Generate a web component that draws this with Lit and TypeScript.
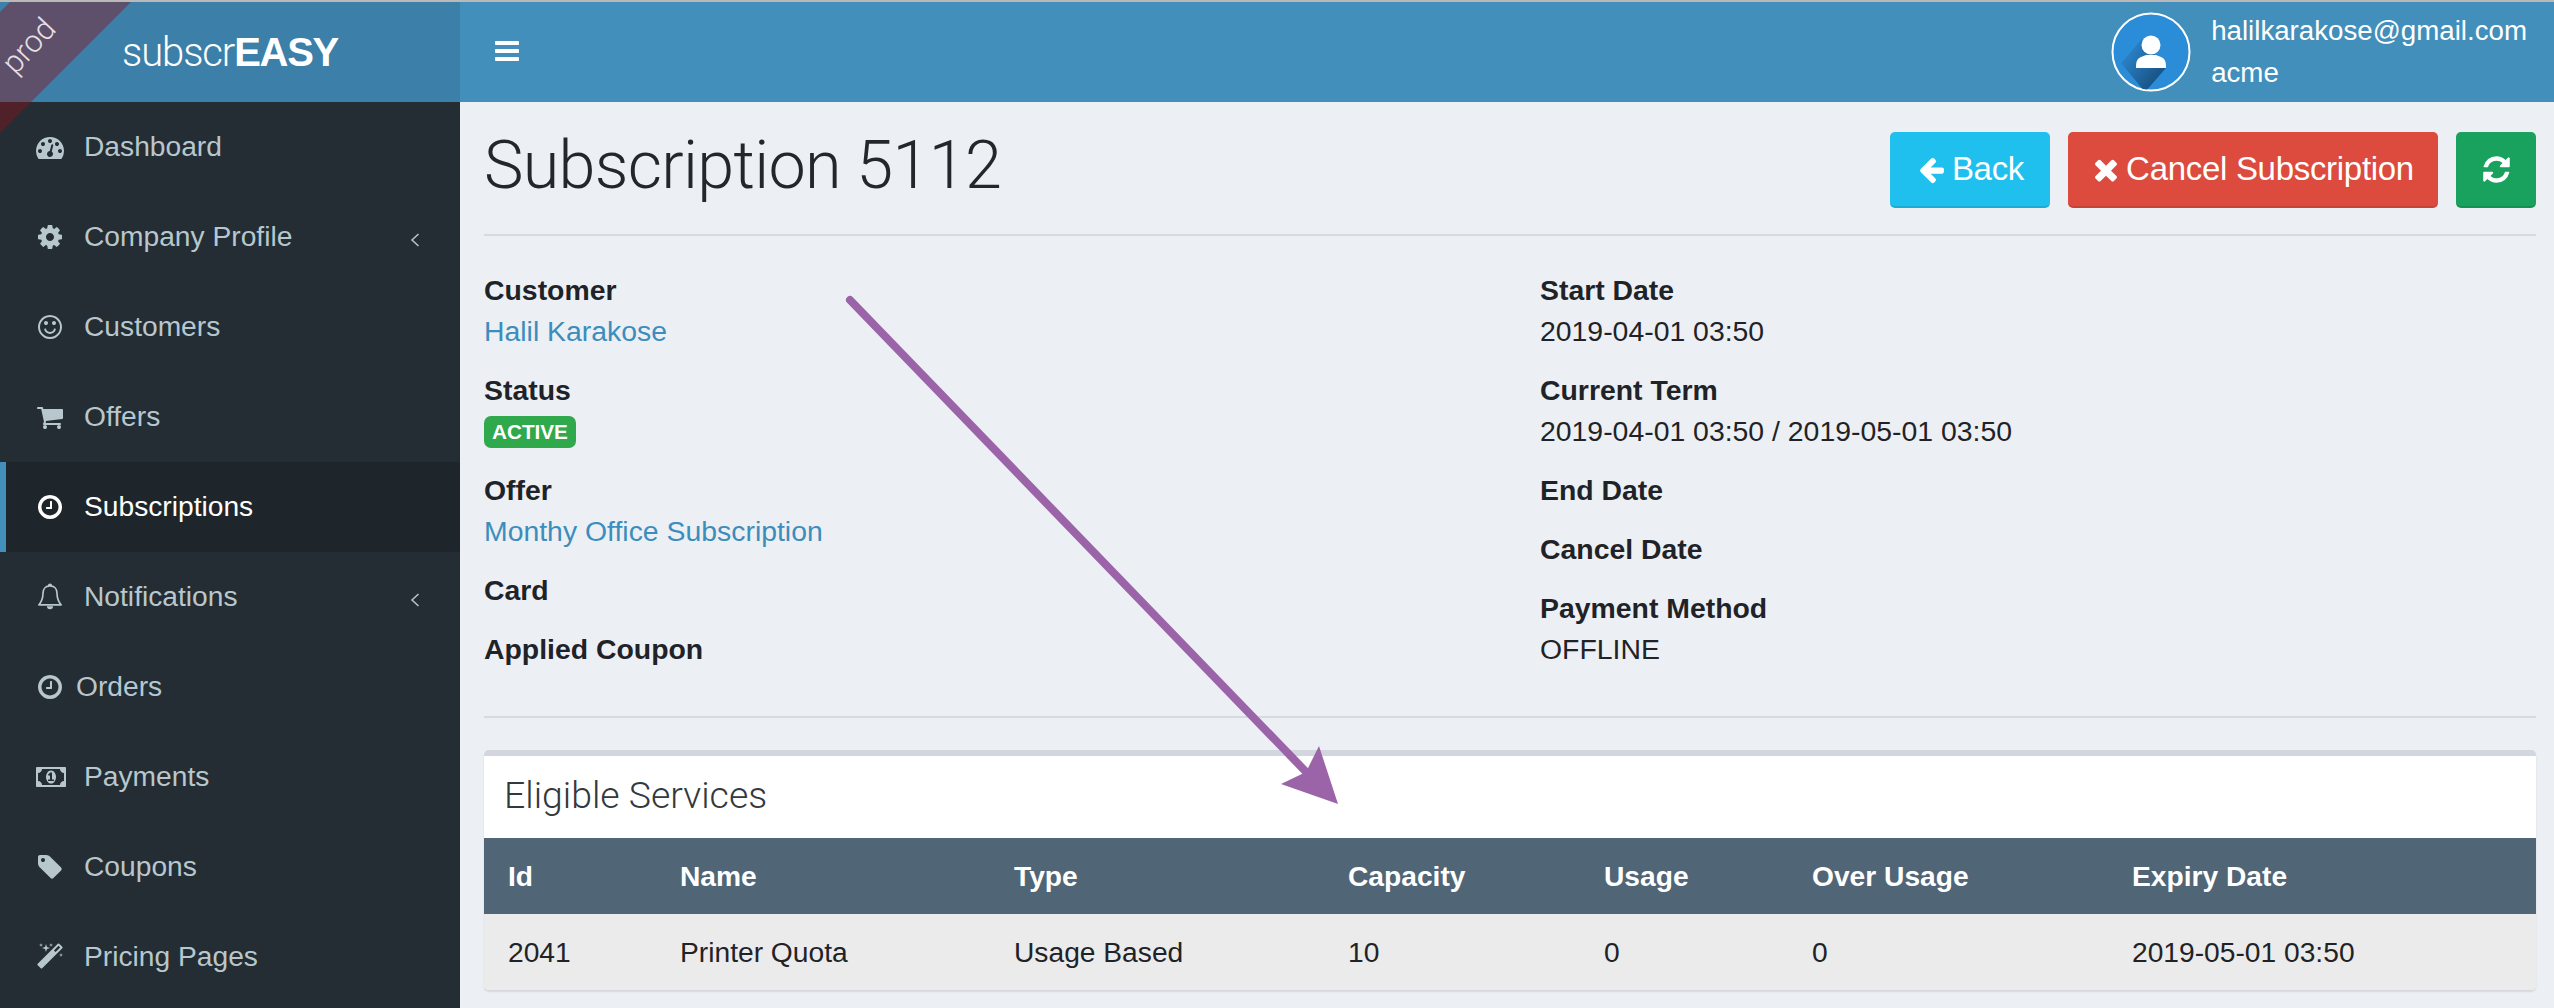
import { LitElement, html, css, svg } from "lit";
import { customElement } from "lit/decorators.js";

const P: Record<string, [string, string]> = {
  dashboard: ["0 0 1792 1792", "M384 1152q0-53-37.500-90.500t-90.500-37.500-90.500 37.500-37.500 90.500 37.500 90.500 90.500 37.500 90.500-37.500 37.500-90.500zm192-448q0-53-37.500-90.500t-90.500-37.500-90.500 37.500-37.500 90.500 37.500 90.500 90.500 37.500 90.500-37.500 37.500-90.500zm428 481l101-382q6-26-7.500-48.500t-38.500-29.500-48 6.500-30 39.500l-101 382q-60 5-107 43.500t-63 98.500q-20 77 20 146t117 89 146-20 89-117q16-60-6-117t-72-91zm660-33q0-53-37.500-90.500t-90.500-37.500-90.500 37.500-37.500 90.500 37.500 90.500 90.500 37.500 90.500-37.500 37.500-90.500zm-640-640q0-53-37.500-90.500t-90.500-37.500-90.500 37.500-37.500 90.500 37.500 90.500 90.500 37.500 90.500-37.500 37.500-90.500zm448 192q0-53-37.500-90.500t-90.500-37.500-90.500 37.500-37.500 90.500 37.500 90.500 90.500 37.500 90.500-37.500 37.500-90.500zm320 448q0 261-141 483-19 29-54 29h-1402q-35 0-54-29-141-221-141-483 0-182 71-348t191-286 286-191 348-71 348 71 286 191 191 286 71 348z"],
  cog: ["0 0 1536 1792", "M1024 896q0-106-75-181t-181-75-181 75-75 181 75 181 181 75 181-75 75-181zm512-109v222q0 12-8 23t-20 13l-185 28q-19 54-39 91 35 50 107 138 10 12 10 25t-9 23q-27 37-99 108t-94 71q-12 0-26-9l-138-108q-44 23-91 38-16 136-29 186-7 28-36 28h-222q-14 0-24.500-8.500t-11.500-21.500l-28-184q-49-16-90-37l-141 107q-10 9-25 9-14 0-25-11-126-114-165-168-7-10-7-23 0-12 8-23 15-21 51-66.500t54-70.500q-27-50-41-99l-183-27q-13-2-21-12.500t-8-23.500v-222q0-12 8-23t19-13l186-28q14-46 39-92-40-57-107-138-10-12-10-24 0-10 9-23 26-36 98.500-107.500t94.500-71.500q13 0 26 10l138 107q44-23 91-38 16-136 29-186 7-28 36-28h222q14 0 24.500 8.500t11.500 21.500l28 184q49 16 90 37l142-107q9-9 24-9 13 0 25 10 129 119 165 170 7 8 7 22 0 12-8 23-15 21-51 66.500t-54 70.500q26 50 41 98l183 28q13 2 21 12.500t8 23.500z"],
  smile: ["0 0 1536 1792", "M1134 1075q-37 121-138 195t-228 74-228-74-138-195q-8-25 4-48.500t38-31.500q25-8 48.500 4t31.500 38q25 80 92.500 129.500t151.500 49.500 151.500-49.500 92.500-129.500q8-26 32-38t49-4 37 31.500 4 48.500zm-494-435q0 53-37.500 90.500t-90.500 37.500-90.500-37.500-37.500-90.500 37.500-90.500 90.500-37.500 90.500 37.500 37.500 90.500zm512 0q0 53-37.500 90.500t-90.500 37.500-90.500-37.500-37.500-90.500 37.500-90.500 90.500-37.500 90.500 37.500 37.500 90.500zm256 256q0-130-51-248.500t-136.500-204-204-136.500-248.500-51-248.500 51-204 136.500-136.500 204-51 248.500 51 248.500 136.500 204 204 136.500 248.500 51 248.500-51 204-136.500 136.500-204 51-248.500zm128 0q0 209-103 385.500t-279.500 279.500-385.500 103-385.500-103-279.500-279.500-103-385.500 103-385.500 279.500-279.500 385.500-103 385.500 103 279.500 279.500 103 385.500z"],
  cart: ["0 0 1664 1792", "M640 1536q0 52-38 90t-90 38-90-38-38-90 38-90 90-38 90 38 38 90zm896 0q0 52-38 90t-90 38-90-38-38-90 38-90 90-38 90 38 38 90zm128-1088v512q0 24-16.500 42.500t-40.500 21.500l-1044 122q13 60 13 70 0 16-24 64h920q26 0 45 19t19 45-19 45-45 19h-1024q-26 0-45-19t-19-45q0-11 8-31.500t16-36 21.500-40 15.500-29.500l-177-823h-204q-26 0-45-19t-19-45 19-45 45-19h256q16 0 28.500 6.500t19.500 15.500 13 24.500 8 26 5.500 29.500 4.500 26h1201q26 0 45 19t19 45z"],
  clock: ["0 0 1536 1792", "M896 544v448q0 14-9 23t-23 9h-320q-14 0-23-9t-9-23v-64q0-14 9-23t23-9h224v-352q0-14 9-23t23-9h64q14 0 23 9t9 23zm416 352q0-148-73-273t-198-198-273-73-273 73-198 198-73 273 73 273 198 198 273 73 273-73 198-198 73-273zm224 0q0 209-103 385.500t-279.500 279.500-385.500 103-385.500-103-279.500-279.500-103-385.500 103-385.500 279.500-279.500 385.500-103 385.500 103 279.500 279.500 103 385.500z"],
  money: ["0 0 2048 1792", "M768 1152h384v-96h-128v-448h-114l-148 137 77 80q42-37 55-57h2v288h-128v96zm512-256q0 70-21 142t-59.500 134-101.500 101-138 39-138-39-101.500-101-59.500-134-21-142 21-142 59.500-134 101.500-101 138-39 138 39 101.500 101 59.500 134 21 142zm512 256v-512q-106 0-181-75t-75-181h-1152q0 106-75 181t-181 75v512q106 0 181 75t75 181h1152q0-106 75-181t181-75zm128-832v1152q0 26-19 45t-45 19h-1792q-26 0-45-19t-19-45v-1152q0-26 19-45t45-19h1792q26 0 45 19t19 45z"],
  tag: ["0 0 1536 1792", "M448 448q0-53-37.500-90.500t-90.500-37.500-90.500 37.500-37.500 90.500 37.500 90.500 90.500 37.500 90.500-37.500 37.500-90.500zm1067 576q0 53-37 90l-491 492q-39 37-91 37-53 0-90-37l-715-716q-38-37-64.500-101t-26.500-117v-416q0-52 38-90t90-38h416q53 0 117 26.500t102 64.500l715 714q37 39 37 91z"],
  magic: ["0 0 1792 1792", "M1254 581l293-293-107-107-293 293zm447-293q0 27-18 45l-1286 1286q-18 18-45 18t-45-18l-198-198q-18-18-18-45t18-45l1286-1286q18-18 45-18t45 18l198 198q18 18 18 45zm-1351-190l98 30-98 30-30 98-30-98-98-30 98-30 30-98zm350 162l196 60-196 60-60 196-60-196-196-60 196-60 60-196zm930 478l98 30-98 30-30 98-30-98-98-30 98-30 30-98zm-640-640l98 30-98 30-30 98-30-98-98-30 98-30 30-98z"],
  arrow: ["0 0 1792 1792", "M1664 896v128q0 53-32.500 90.500t-84.500 37.500h-704l293 294q38 36 38 90t-38 90l-75 76q-38 38-90 38-53 0-91-38l-651-652q-37-37-37-90 0-52 37-91l651-650q38-38 91-38 52 0 90 38l75 74q38 38 38 91t-38 91l-293 293h704q52 0 84.500 37.500t32.500 90.500z"],
  times: ["0 0 1408 1792", "M1298 1322q0 40-28 68l-136 136q-28 28-68 28t-68-28l-294-294-294 294q-28 28-68 28t-68-28l-136-136q-28-28-28-68t28-68l294-294-294-294q-28-28-28-68t28-68l136-136q28-28 68-28t68 28l294 294 294-294q28-28 68-28t68 28l136 136q28 28 28 68t-28 68l-294 294 294 294q28 28 28 68z"],
  refresh: ["0 0 1792 1792", "M1639 1056q0 5-1 7-64 268-268 434.500t-478 166.500q-146 0-282.500-55t-243.500-157l-129 129q-19 19-45 19t-45-19-19-45v-448q0-26 19-45t45-19h448q26 0 45 19t19 45-19 45l-137 137q71 66 161 102t187 36q134 0 250-65t186-179q11-17 53-117 8-23 30-23h192q13 0 22.500 9.500t9.500 22.500zm25-800v448q0 26-19 45t-45 19h-448q-26 0-45-19t-19-45 19-45l138-138q-148-137-349-137-134 0-250 65t-186 179q-11 17-53 117-8 23-30 23h-199q-13 0-22.500-9.500t-9.500-22.500v-7q65-268 270-434.500t480-166.500q146 0 284 55.500t245 156.500l130-129q19-19 45-19t45 19 19 45z"],
  bars: ["0 0 1792 1792", "M1664 1344v128q0 26-19 45t-45 19h-1408q-26 0-45-19t-19-45v-128q0-26 19-45t45-19h1408q26 0 45 19t19 45zm0-512v128q0 26-19 45t-45 19h-1408q-26 0-45-19t-19-45v-128q0-26 19-45t45-19h1408q26 0 45 19t19 45zm0-512v128q0 26-19 45t-45 19h-1408q-26 0-45-19t-19-45v-128q0-26 19-45t45-19h1408q26 0 45 19t19 45z"],
};

const ic = (n: string, cls = "") => html`<svg class="ic i-${n} ${cls}" viewBox=${P[n][0]}><path d=${P[n][1]} fill="currentColor"></path></svg>`;

const bell = html`<svg class="ic" viewBox="0 0 28 32"><path d="M14 3.200c-5.200 0-8 3.800-8 8.300 0 7.500-2 10.500-4.700 13.500h25.400C24 22 22 19 22 11.500c0-4.500-2.800-8.300-8-8.300zM12.500 3c0-2 3-2 3 0" fill="none" stroke="currentColor" stroke-width="1.900" stroke-linejoin="round"></path><path d="M10.500 26.500a3.500 3.500 0 0 0 7 0z" fill="currentColor"></path></svg>`;

const chevron = html`<svg class="chev" viewBox="0 0 10 14"><path d="M8.500 1 2 7l6.500 6" fill="none" stroke="currentColor" stroke-width="1.500"></path></svg>`;

const NAV = [
  { label: "Dashboard", icon: "dashboard" },
  { label: "Company Profile", icon: "cog", more: true },
  { label: "Customers", icon: "smile" },
  { label: "Offers", icon: "cart" },
  { label: "Subscriptions", icon: "clock", active: true },
  { label: "Notifications", icon: "bell", more: true },
  { label: "Orders", icon: "clock", tight: true },
  { label: "Payments", icon: "money" },
  { label: "Coupons", icon: "tag" },
  { label: "Pricing Pages", icon: "magic" },
];

const HEAD = ["Id", "Name", "Type", "Capacity", "Usage", "Over Usage", "Expiry Date"];
const ROW = ["2041", "Printer Quota", "Usage Based", "10", "0", "0", "2019-05-01 03:50"];

@customElement("app-root")
export class AppRoot extends LitElement {
  static styles = css`
    :host {
      display: block;
      position: relative;
      width: 2554px;
      height: 1008px;
      overflow: hidden;
      background: #ecf0f5;
      font-family: "Liberation Sans", Arial, sans-serif;
      font-size: 28.400px;
      color: #1f2327;
    }
    .app { display: grid; grid-template-columns: 460px 1fr; grid-template-rows: 102px 1fr; height: 1008px; }
    .logo {
      background: #3c7fa8;
      border-top: 2px solid #b9b9b9;
      box-sizing: border-box;
      color: #fff;
      font-size: 40px;
      letter-spacing: -1.300px;
      padding: 0 0 0 122px;
      display: flex;
      align-items: center;
    }
    .logo .thin { font-family: Roboto, sans-serif; font-weight: 300; letter-spacing: -1.100px; }
    .logo b { font-weight: 700; }
    .topbar {
      background: #428fbb;
      border-top: 2px solid #b9b9b9;
      box-sizing: border-box;
      color: #fff;
      display: flex;
      align-items: center;
      justify-content: space-between;
      padding: 0 27px 0 33px;
    }
    .burger { width: 30px; height: 30px; display: block; }
    .user { display: flex; align-items: center; gap: 20px; }
    .avatar { width: 80px; height: 80px; display: block; }
    .who { line-height: 42px; font-size: 27.700px; padding-bottom: 1px; }
    .side { background: #232d33; color: #b8c7ce; overflow: hidden; font-size: 28.200px; }
    .item {
      height: 90px;
      box-sizing: border-box;
      display: flex;
      align-items: center;
      padding: 0 36px 1px;
      position: relative;
    }
    .item.active { background: #1e262c; color: #fff; box-shadow: inset 6px 0 0 #428fbb; }
    .iconbox { width: 48px; display: flex; align-items: center; flex: none; }
    .item.tight .iconbox { width: 40px; }
    .ic { width: 28px; height: 28px; display: block; flex: none; }
    .ic.i-money { width: 32px; }
    .iconbox .ic { overflow: visible; }
    .chev { width: 10px; height: 14px; margin-left: auto; margin-right: 4px; margin-top: 7px; display: block; }
    .main { padding: 0 18px 0 24px; }
    .title-row { display: flex; align-items: flex-start; justify-content: space-between; height: 134px; box-sizing: border-box; border-bottom: 2px solid #d6dae1; }
    h1 { margin: 27px 0 0; font-size: 66.500px; font-weight: 300; line-height: 72px; letter-spacing: -0.700px; color: #22272b; font-family: Roboto, sans-serif; }
    .btns { display: flex; gap: 18px; margin-top: 30px; }
    .btn {
      height: 76px;
      box-sizing: border-box;
      border-radius: 5px;
      color: #fff;
      display: flex;
      align-items: center;
      justify-content: center;
      gap: 6px;
      font-size: 33px;
      letter-spacing: -0.300px;
      border-bottom: 2px solid rgba(0,0,0,.1);
    }
    .btn .ic { width: 29px; height: 29px; }
    .btn .x { width: 26px; height: 33px; margin-right: 1px; }
    .btn .r { width: 31px; height: 31px; }
    .back { width: 160px; background: #1fc0ee; padding-left: 1px; }
    .cancel { width: 370px; background: #dc4b3e; padding-left: 1px; }
    .refresh { width: 80px; background: #18a25e; }
    .details { display: grid; grid-template-columns: 1056px 1fr; height: 482px; box-sizing: border-box; padding-top: 34px; border-bottom: 2px solid #d6dae1; }
    .f { margin-bottom: 18px; line-height: 41px; }
    .f .k { font-weight: 700; display: block; line-height: 41px; }
    .f .v { display: block; line-height: 41px; }
    a { color: #3c8dbc; text-decoration: none; }
    .badge { display: inline-block; background: #30a84c; color: #fff; font-weight: 700; font-size: 20.700px; line-height: 32px; padding: 0 8px; border-radius: 7px; vertical-align: top; margin-top: 5px; }
    .panel { margin-top: 32px; border-top: 6px solid #d2d6de; border-radius: 5px; background: #fff; box-shadow: 0 2px 2px rgba(0,0,0,.1); overflow: hidden; }
    .panel h3 { margin: 0; font-family: Roboto, sans-serif; font-weight: 300; font-size: 37.400px; line-height: 79px; height: 82px; padding-left: 20px; color: #33383c; }
    .tr { display: grid; grid-template-columns: 172px 334px 334px 256px 208px 320px 1fr; height: 76px; align-items: center; padding-left: 24px; font-size: 28.200px; }
    .th { background: #506576; color: #fff; font-weight: 700; }
    .td { background: #ebebeb; }
    .arrow { position: absolute; left: 0; top: 0; width: 2554px; height: 1008px; pointer-events: none; }
    .ribbon { position: absolute; left: 0; top: 0; width: 140px; height: 140px; pointer-events: none; }
    .prod { position: absolute; left: 29px; top: 46px; font-size: 31px; color: #e4e0e6; transform: translate(-50%, -50%) rotate(-47deg); font-family: Roboto, sans-serif; font-weight: 300; line-height: 36px; }
  `;

  private field(k: string, v?: unknown) {
    return html`<div class="f"><span class="k">${k}</span>${v !== undefined ? html`<span class="v">${v}</span>` : ""}</div>`;
  }

  render() {
    return html`
      <div class="app">
        <div class="logo"><span class="thin">subscr</span><b>EASY</b></div>
        <header class="topbar">
          <span class="burger">${ic("bars", "burger")}</span>
          <div class="user">
            <svg class="avatar" viewBox="0 0 80 80">
              <defs><clipPath id="c"><circle cx="40" cy="40" r="38"></circle></clipPath>
              <linearGradient id="g" x1="0.100" y1="0.300" x2="0.700" y2="0.800"><stop offset="0" stop-color="#2a82c8"></stop><stop offset="1" stop-color="#1a5689"></stop></linearGradient></defs>
              <circle cx="40" cy="40" r="38.500" fill="#2b8cd8" stroke="#fff" stroke-width="2"></circle>
              <path clip-path="url(#c)" d="M31 27 10 51 34 80 55 56z" fill="url(#g)"></path>
              <ellipse cx="40" cy="33" rx="9.500" ry="9.500" fill="#fff"></ellipse>
              <path d="M25 56c0-7 1-9 5-11l5-2h10l5 2c4 2 5 4 5 11z" fill="#fff"></path>
            </svg>
            <div class="who"><div>halilkarakose@gmail.com</div><div>acme</div></div>
          </div>
        </header>
        <nav class="side">
          ${NAV.map((n) => html`<div class="item ${n.active ? "active" : ""} ${n.tight ? "tight" : ""}">
            <span class="iconbox">${n.icon === "bell" ? bell : ic(n.icon)}</span>
            <span>${n.label}</span>
            ${n.more ? chevron : ""}
          </div>`)}
        </nav>
        <main class="main">
          <div class="title-row">
            <h1>Subscription 5112</h1>
            <div class="btns">
              <div class="btn back">${ic("arrow")}<span>Back</span></div>
              <div class="btn cancel">${ic("times", "x")}<span>Cancel Subscription</span></div>
              <div class="btn refresh">${ic("refresh", "r")}</div>
            </div>
          </div>
          <section class="details">
            <div>
              ${this.field("Customer", html`<a>Halil Karakose</a>`)}
              ${this.field("Status", html`<span class="badge">ACTIVE</span>`)}
              ${this.field("Offer", html`<a>Monthy Office Subscription</a>`)}
              ${this.field("Card")}
              ${this.field("Applied Coupon")}
            </div>
            <div>
              ${this.field("Start Date", "2019-04-01 03:50")}
              ${this.field("Current Term", "2019-04-01 03:50 / 2019-05-01 03:50")}
              ${this.field("End Date")}
              ${this.field("Cancel Date")}
              ${this.field("Payment Method", "OFFLINE")}
            </div>
          </section>
          <section class="panel">
            <h3>Eligible Services</h3>
            <div class="tr th">${HEAD.map((h) => html`<span>${h}</span>`)}</div>
            <div class="tr td">${ROW.map((h) => html`<span>${h}</span>`)}</div>
          </section>
        </main>
      </div>
      <svg class="ribbon" viewBox="0 0 140 140"><path d="M0 12 10 2h121L0 133z" fill="rgba(140,19,27,.44)"></path></svg>
      <div class="prod">prod</div>
      <svg class="arrow" viewBox="0 0 2554 1008">
        ${svg`<path d="M850 300 1310 776" stroke="#9c64a8" stroke-width="8" stroke-linecap="round" fill="none"></path>
        <path d="M1338 804 1281 784 1306 772 1319 746z" fill="#9c64a8"></path>`}
      </svg>
    `;
  }
}
